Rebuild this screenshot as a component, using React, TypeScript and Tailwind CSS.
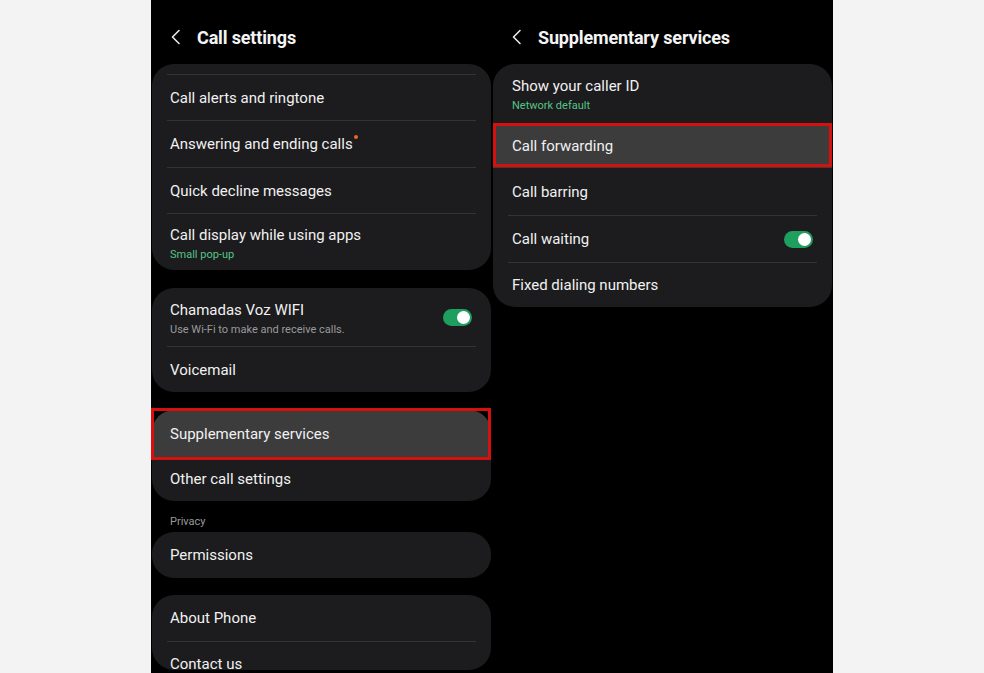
import React from 'react';

const font = { fontFamily: 'Roboto, "Noto Sans", sans-serif' };

const Chevron = () => (
  <svg width="12" height="16" viewBox="0 0 12 16" fill="none" className="shrink-0">
    <polyline points="9,1.5 2.5,8 9,14.5" stroke="#e8e8e8" strokeWidth="1.6" strokeLinecap="round" strokeLinejoin="round" />
  </svg>
);

const Toggle = () => (
  <div className="w-[29px] h-[17px] rounded-full bg-[#1e9e5f] flex items-center justify-end pr-[2px] shrink-0">
    <div className="w-[13px] h-[13px] rounded-full bg-white" />
  </div>
);

const Sep = () => <div className="h-px bg-[#333335] mx-[15px]" />;

type RowProps = { title: string; sub?: string; subGreen?: boolean; h: string; dot?: boolean; toggle?: boolean; hl?: boolean; pl?: string };

const Row = ({ title, sub, subGreen, h, dot, toggle, hl, pl = 'pl-[18px]' }: RowProps) => (
  <div className={`${h} ${pl} pr-[19px] flex items-center ${hl ? 'bg-[#3c3c3d]' : ''}`}>
    <div className="flex-1 min-w-0">
      <div className="text-[15px] leading-[20px] text-[#f1f1f1] relative inline-block">
        {title}
        {dot && <span className="absolute -right-[5px] top-[1px] w-[4px] h-[4px] rounded-full bg-[#f0642a]" />}
      </div>
      {sub && (
        <div className={`${subGreen ? 'text-[11px] text-[#55c487]' : 'text-[11px] text-[#9a9a9a]'} leading-[14px] mt-[1px]`}>{sub}</div>
      )}
    </div>
    {toggle && <Toggle />}
  </div>
);

const Header = ({ title }: { title: string }) => (
  <div className="h-[64px] flex items-center gap-[15px] pl-[18px] pt-[10px]">
    <Chevron />
    <div className="text-[18px] font-bold text-[#f4f4f4] tracking-[-0.15px]">{title}</div>
  </div>
);

export default function App() {
  return (
    <div className="w-[984px] h-[673px] bg-[#f3f3f3] flex pl-[151px] overflow-hidden" style={font}>
      {/* Left screen: Call settings */}
      <div className="w-[341px] h-full bg-black px-px overflow-hidden">
        <Header title="Call settings" />
        <div className="flex flex-col">
          <div className="rounded-[22px] bg-[#1c1c1e] overflow-hidden">
            <div className="h-[10px]" />
            <Sep />
            <Row h="h-[45px]" title="Call alerts and ringtone" />
            <Sep />
            <Row h="h-[46px]" title="Answering and ending calls" dot />
            <Sep />
            <Row h="h-[45px]" title="Quick decline messages" />
            <Sep />
            <Row h="h-[56px]" title="Call display while using apps" sub="Small pop-up" subGreen />
          </div>

          <div className="rounded-[22px] bg-[#1c1c1e] overflow-hidden mt-[18px]">
            <Row h="h-[58px]" title="Chamadas Voz WIFI" sub="Use Wi-Fi to make and receive calls." toggle />
            <Sep />
            <Row h="h-[45px]" title="Voicemail" />
          </div>

          <div className="relative mt-[18px]">
            <div className="rounded-[22px] bg-[#1c1c1e] overflow-hidden">
              <Row h="h-[47px]" title="Supplementary services" hl />
              <Row h="h-[44px]" title="Other call settings" />
            </div>
            <div className="absolute -left-px -top-[2px] w-[340px] h-[52px] border-[3px] border-[#d60f0f]" />
          </div>

          <div className="h-[31px] pl-[18px] pt-[14px] text-[11px] leading-[14px] text-[#9a9a9a]">Privacy</div>

          <div className="rounded-[22px] bg-[#1c1c1e] overflow-hidden">
            <Row h="h-[46px]" title="Permissions" />
          </div>

          <div className="rounded-[22px] bg-[#1c1c1e] overflow-hidden mt-[17px] h-[75px]">
            <Row h="h-[46px]" title="About Phone" />
            <Sep />
            <Row h="h-[44px]" title="Contact us" />
          </div>
        </div>
      </div>

      {/* Right screen: Supplementary services */}
      <div className="w-[341px] h-full bg-black px-px overflow-hidden">
        <Header title="Supplementary services" />
        <div className="relative">
          <div className="rounded-[22px] bg-[#1c1c1e] overflow-hidden">
            <Row h="h-[59px]" title="Show your caller ID" sub="Network default" subGreen pl="pl-[19px]" />
            <Row h="h-[45px]" title="Call forwarding" hl pl="pl-[19px]" />
            <Row h="h-[47px]" title="Call barring" pl="pl-[19px]" />
            <Sep />
            <Row h="h-[46px]" title="Call waiting" toggle pl="pl-[19px]" />
            <Sep />
            <Row h="h-[44px]" title="Fixed dialing numbers" pl="pl-[19px]" />
          </div>
          <div className="absolute left-0 top-[59px] w-[339px] h-[44px] border-[3px] border-[#d60f0f]" />
        </div>
      </div>
    </div>
  );
}
